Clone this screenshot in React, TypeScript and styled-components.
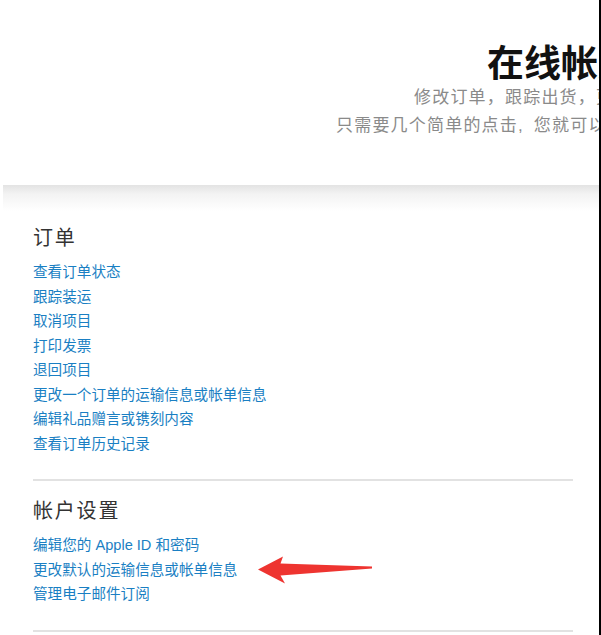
import React from "react";
import styled, { createGlobalStyle } from "styled-components";

const Global = createGlobalStyle`
  html, body { margin: 0; padding: 0; background: #fff; }
  body { font-family: "Liberation Sans", "Noto Sans CJK SC", sans-serif; }
`;

const Page = styled.div`
  width: 601px;
  height: 635px;
  box-sizing: border-box;
  border-right: 2px solid #000;
  overflow: hidden;
  background: #fff;
  display: flex;
  flex-direction: column;
`;

const Header = styled.header`
  flex: none;
  height: 185px;
  box-sizing: border-box;
  padding-top: 38px;
  display: flex;
  flex-direction: column;
  white-space: nowrap;
  overflow: hidden;
`;

const Title = styled.h1<{ $indent: number }>`
  margin: 0 0 0 ${(p) => p.$indent}px;
  font-family: "Noto Sans CJK SC", sans-serif;
  font-size: 37px;
  line-height: 46px;
  font-weight: 700;
  color: #111;
`;

const Subtitle = styled.p<{ $indent: number }>`
  margin: 0 0 0 ${(p) => p.$indent}px;
  font-family: "Liberation Sans", "Noto Sans CJK SC", sans-serif;
  font-size: 17px;
  line-height: 28px;
  letter-spacing: 1.2px;
  word-spacing: 4px;
  color: #8a8a8a;
`;

const ShadowBand = styled.div`
  flex: none;
  height: 26px;
  margin-left: 3px;
  background: linear-gradient(to bottom, #e3e3e3 0%, #f3f3f3 35%, #fff 100%);
`;

const Main = styled.main`
  flex: none;
  padding: 13px 26px 0 33px;
  display: flex;
  flex-direction: column;
`;

const Section = styled.section`
  display: flex;
  flex-direction: column;
`;

const Heading = styled.h2`
  margin: 0 0 8px 0;
  font-family: "Liberation Sans", "Noto Sans CJK SC", sans-serif;
  font-size: 20px;
  line-height: 28px;
  font-weight: 400;
  letter-spacing: 1.8px;
  color: #333;
`;

const LinkList = styled.ul`
  list-style: none;
  margin: 0;
  padding: 0;
  display: flex;
  flex-direction: column;
`;

const LinkRow = styled.li`
  display: flex;
  align-items: center;
  height: 24.5px;
`;

const Link = styled.a`
  font-family: "Liberation Sans", "Noto Sans CJK SC", sans-serif;
  font-size: 14.6px;
  line-height: 24.5px;
  color: #1a7fc3;
  text-decoration: none;
  white-space: nowrap;
`;

const Divider = styled.hr`
  margin: 23px 0 16px 0;
  border: none;
  border-top: 2px solid #e2e2e2;
  height: 0;
`;

const ArrowSvg = styled.svg`
  margin-left: 21px;
  flex: none;
`;

const Arrow = () => (
  <ArrowSvg width="116" height="28" viewBox="0 0 116 28">
    <path
      d="M0 13.5 L25 0.5 L22.5 7.5 L114 10.5 L114 12.5 L22.5 19.5 L27 27.5 Z"
      fill="#ee3430"
    />
  </ArrowSvg>
);

type Item = { text: string; arrow?: boolean };

const orders: Item[] = [
  { text: "查看订单状态" },
  { text: "跟踪装运" },
  { text: "取消项目" },
  { text: "打印发票" },
  { text: "退回项目" },
  { text: "更改一个订单的运输信息或帐单信息" },
  { text: "编辑礼品赠言或镌刻内容" },
  { text: "查看订单历史记录" },
];

const account: Item[] = [
  { text: "编辑您的 Apple ID 和密码" },
  { text: "更改默认的运输信息或帐单信息", arrow: true },
  { text: "管理电子邮件订阅" },
];

const LinkGroup = ({ items }: { items: Item[] }) => (
  <LinkList>
    {items.map((it) => (
      <LinkRow key={it.text}>
        <Link href="#">{it.text}</Link>
        {it.arrow && <Arrow />}
      </LinkRow>
    ))}
  </LinkList>
);

export default function App() {
  return (
    <>
      <Global />
      <Page>
        <Header>
          <Title $indent={487}>在线帐户管理</Title>
          <Subtitle $indent={414}>修改订单，跟踪出货，更新您的帐户信息。</Subtitle>
          <Subtitle $indent={336}>只需要几个简单的点击, 您就可以轻松完成这一切。</Subtitle>
        </Header>
        <ShadowBand />
        <Main>
          <Section>
            <Heading>订单</Heading>
            <LinkGroup items={orders} />
          </Section>
          <Divider />
          <Section>
            <Heading>帐户设置</Heading>
            <LinkGroup items={account} />
          </Section>
          <Divider />
        </Main>
      </Page>
    </>
  );
}
